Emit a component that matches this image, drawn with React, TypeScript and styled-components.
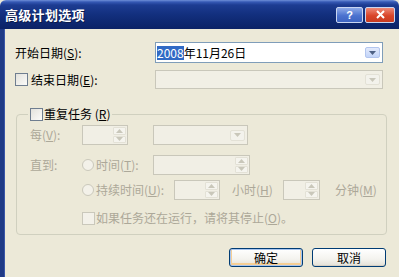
import React from 'react';
import styled, { createGlobalStyle, css } from 'styled-components';

const GlobalStyle = createGlobalStyle`
  html, body {
    margin: 0;
    padding: 0;
    background: #ece9d8;
  }
  body {
    font-family: "Noto Sans CJK SC", "Liberation Sans", sans-serif;
    font-size: 12px;
    color: #000;
  }
`;

const DISABLED = '#aca899';

function Arrow({ color, up }: { color: string; up?: boolean }) {
  return (
    <svg width="7" height="4" viewBox="0 0 7 4">
      <path d={up ? 'M0 4 L3.5 0 L7 4 Z' : 'M0 0 L7 0 L3.5 4 Z'} fill={color} />
    </svg>
  );
}

function Combo({ width, height, disabled, children }: { width: number; height: number; disabled?: boolean; children?: React.ReactNode }) {
  return (
    <ComboBox $w={width} $h={height} $disabled={disabled}>
      <ComboText>{children}</ComboText>
      <DropButton $disabled={disabled}>
        <Arrow color={disabled ? '#c9c7ba' : '#4d6185'} />
      </DropButton>
    </ComboBox>
  );
}

function Spin({ width, height = 20 }: { width: number; height?: number }) {
  return (
    <SpinBox $w={width} $h={height}>
      <SpinButtons>
        <SpinHalf>
          <Arrow color="#c9c7ba" up />
        </SpinHalf>
        <SpinHalf>
          <Arrow color="#c9c7ba" />
        </SpinHalf>
      </SpinButtons>
    </SpinBox>
  );
}

function App() {
  return (
    <Window>
      <GlobalStyle />
      <TitleBar>
        <Title>高级计划选项</Title>
        <CaptionButtons>
          <CaptionButton $kind="help">?</CaptionButton>
          <CaptionButton $kind="close">
            <svg width="9" height="9" viewBox="0 0 9 9">
              <path d="M1 1 L8 8 M8 1 L1 8" stroke="#fff" strokeWidth="2" />
            </svg>
          </CaptionButton>
        </CaptionButtons>
      </TitleBar>

      <Body>
        <FormRow $h={21}>
          <FieldLabel $w={140}>
            开始日期(<u>S</u>):
          </FieldLabel>
          <Combo width={228} height={21}>
            <Selected>2008</Selected>年11月26日
          </Combo>
        </FormRow>

        <FormRow $h={19} $top={7}>
          <FieldLabel $w={140}>
            <CheckBox $mr={3} />
            结束日期(<u>E</u>):
          </FieldLabel>
          <Combo width={228} height={19} disabled />
        </FormRow>

        <GroupBox>
          <Legend>
            <LegendInner>
              <CheckBox $mr={1} />
              重复任务 (<u>R</u>)
            </LegendInner>
          </Legend>

          <GroupRow $h={20} $top={2}>
            <FieldLabel $w={52} $disabled>
              每(<u>V</u>):
            </FieldLabel>
            <Spin width={46} />
            <Gap $w={25} />
            <Combo width={95} height={20} disabled />
          </GroupRow>

          <GroupRow $h={20} $top={10}>
            <FieldLabel $w={52} $disabled>
              直到:
            </FieldLabel>
            <FieldLabel $w={71} $disabled>
              <Radio />
              时间(<u>T</u>):
            </FieldLabel>
            <Spin width={97} />
          </GroupRow>

          <GroupRow $h={20} $top={5}>
            <Gap $w={52} />
            <FieldLabel $w={92} $disabled>
              <Radio />
              持续时间(<u>U</u>):
            </FieldLabel>
            <Spin width={46} />
            <FieldLabel $w={63} $disabled $pl={12}>
              小时(<u>H</u>)
            </FieldLabel>
            <Spin width={37} />
            <FieldLabel $disabled $pl={15}>
              分钟(<u>M</u>)
            </FieldLabel>
          </GroupRow>

          <GroupRow $h={14} $top={11}>
            <Gap $w={52} />
            <FieldLabel $disabled>
              <CheckBox $mr={1} $disabled />
              如果任务还在运行，请将其停止(<u>O</u>)。
            </FieldLabel>
          </GroupRow>
        </GroupBox>

        <ButtonRow>
          <PushButton $default>确定</PushButton>
          <PushButton>取消</PushButton>
        </ButtonRow>
      </Body>
    </Window>
  );
}

export default App;

const Window = styled.div`
  width: 399px;
  height: 277px;
  display: flex;
  flex-direction: column;
  overflow: hidden;
`;

const TitleBar = styled.div`
  height: 29px;
  flex: none;
  display: flex;
  align-items: center;
  justify-content: space-between;
  padding: 0 4px 1px 5px;
  box-sizing: border-box;
  background: linear-gradient(
    to bottom,
    #6f8fd8 0px,
    #3558b4 2px,
    #1d3c92 5px,
    #13307f 14px,
    #0e2871 22px,
    #0b2266 29px
  );
  border-top-left-radius: 6px;
  border-top-right-radius: 6px;
`;

const Title = styled.span`
  color: #fff;
  font-weight: bold;
  font-size: 13px;
  letter-spacing: 0.3px;
  text-shadow: 1px 1px 0 #0a1a4a;
`;

const CaptionButtons = styled.div`
  display: flex;
  gap: 2px;
  align-items: center;
  margin-top: 1px;
`;

const CaptionButton = styled.div<{ $kind: 'help' | 'close' }>`
  height: 16px;
  display: flex;
  align-items: center;
  justify-content: center;
  border-radius: 2px;
  border: 1px solid #c9d6f2;
  box-sizing: border-box;
  color: #fff;
  font-weight: bold;
  font-family: "Liberation Sans", sans-serif;
  font-size: 11px;
  ${({ $kind }) =>
    $kind === 'help'
      ? css`
          width: 27px;
          background: linear-gradient(to bottom, #8eaae8, #4b72cf 55%, #3e64c2);
        `
      : css`
          width: 30px;
          background: linear-gradient(to bottom, #ee8a78, #d9452a 55%, #c83b20);
        `}
`;

const Body = styled.div`
  flex: 1;
  display: flex;
  flex-direction: column;
  align-items: flex-start;
  background: #ece9d8;
  border-left: 4px solid #1f3a86;
  box-shadow: inset 1px 0 0 #3a56a8;
  padding: 13px 13px 0 11px;
`;

const FormRow = styled.div<{ $h: number; $top?: number }>`
  display: flex;
  align-items: center;
  height: ${({ $h }) => $h}px;
  margin-top: ${({ $top }) => $top ?? 0}px;
`;

const GroupRow = styled(FormRow)``;

const FieldLabel = styled.div<{ $w?: number; $disabled?: boolean; $pl?: number }>`
  display: flex;
  align-items: center;
  flex: none;
  white-space: nowrap;
  width: ${({ $w }) => ($w ? `${$w}px` : 'auto')};
  padding-left: ${({ $pl }) => $pl ?? 0}px;
  box-sizing: border-box;
  color: ${({ $disabled }) => ($disabled ? DISABLED : '#000')};
  line-height: 14px;
`;

const Gap = styled.div<{ $w: number }>`
  width: ${({ $w }) => $w}px;
  flex: none;
`;

const ComboBox = styled.div<{ $w: number; $h: number; $disabled?: boolean }>`
  width: ${({ $w }) => $w}px;
  height: ${({ $h }) => $h}px;
  box-sizing: border-box;
  display: flex;
  align-items: center;
  flex: none;
  border: 1px solid ${({ $disabled }) => ($disabled ? '#c9c7ba' : '#7f9db9')};
  background: ${({ $disabled }) => ($disabled ? '#f1efe5' : '#fff')};
  padding: 0 1px 0 1px;
`;

const ComboText = styled.div`
  flex: 1;
  display: flex;
  align-items: center;
  white-space: nowrap;
  line-height: 14px;
`;

const Selected = styled.span`
  background: #316ac5;
  color: #fff;
`;

const DropButton = styled.div<{ $disabled?: boolean }>`
  width: 15px;
  height: 11px;
  box-sizing: border-box;
  display: flex;
  align-items: center;
  justify-content: center;
  border-radius: 2px;
  margin-right: 1px;
  border: 1px solid ${({ $disabled }) => ($disabled ? '#e3e1d6' : '#b2c5ee')};
  background: ${({ $disabled }) =>
    $disabled ? '#f3f2ec' : 'linear-gradient(to bottom, #e2eafc, #c3d4f8)'};
`;

const SpinBox = styled.div<{ $w: number; $h: number }>`
  width: ${({ $w }) => $w}px;
  height: ${({ $h }) => $h}px;
  flex: none;
  box-sizing: border-box;
  display: flex;
  justify-content: flex-end;
  border: 1px solid #c9c7ba;
  background: #f1efe5;
  padding: 1px;
`;

const SpinButtons = styled.div`
  width: 13px;
  display: flex;
  flex-direction: column;
  gap: 1px;
`;

const SpinHalf = styled.div`
  flex: 1;
  display: flex;
  align-items: center;
  justify-content: center;
  border: 1px solid #e3e1d6;
  border-radius: 1px;
  background: #f5f4ee;
`;

const CheckBox = styled.span<{ $mr?: number; $disabled?: boolean }>`
  display: inline-block;
  width: 13px;
  height: 13px;
  flex: none;
  box-sizing: border-box;
  margin-right: ${({ $mr }) => $mr ?? 0}px;
  border: 1px solid ${({ $disabled }) => ($disabled ? '#cac8bb' : '#6f7e90')};
  background: ${({ $disabled }) =>
    $disabled ? '#f3f1e9' : 'linear-gradient(135deg, #e3e2dc, #fbfbf9)'};
`;

const Radio = styled.span`
  display: inline-block;
  width: 12px;
  height: 12px;
  flex: none;
  margin-right: 2px;
  box-sizing: border-box;
  border-radius: 50%;
  border: 1px solid #cac8bb;
  background: #f3f1e9;
`;

const GroupBox = styled.fieldset`
  margin: 18px 0 0 1px;
  width: 371px;
  box-sizing: border-box;
  border: 1px solid #d0d0bf;
  border-radius: 4px;
  padding: 2px 13px 9px 13px;
  min-inline-size: 0;
`;

const Legend = styled.legend`
  padding: 0 2px;
  margin-left: -2px;
  height: 14px;
`;

const LegendInner = styled.span`
  display: flex;
  align-items: center;
  height: 14px;
  line-height: 14px;
  white-space: nowrap;
`;

const ButtonRow = styled.div`
  align-self: stretch;
  display: flex;
  justify-content: flex-end;
  gap: 9px;
  margin-top: 13px;
`;

const PushButton = styled.button<{ $default?: boolean }>`
  width: 74px;
  height: 19px;
  padding: 0;
  font: inherit;
  font-size: 12px;
  color: #000;
  border: 1px solid #003c74;
  border-radius: 3px;
  background: linear-gradient(to bottom, #ffffff, #f4f3ee 60%, #e3e0d6);
  box-shadow: ${({ $default }) =>
    $default ? 'inset 0 0 0 1px #a9c6f0, inset 0 -1px 0 2px #f6cf95' : 'inset 0 -1px 0 #d6d0c5'};
  line-height: 15px;
`;
